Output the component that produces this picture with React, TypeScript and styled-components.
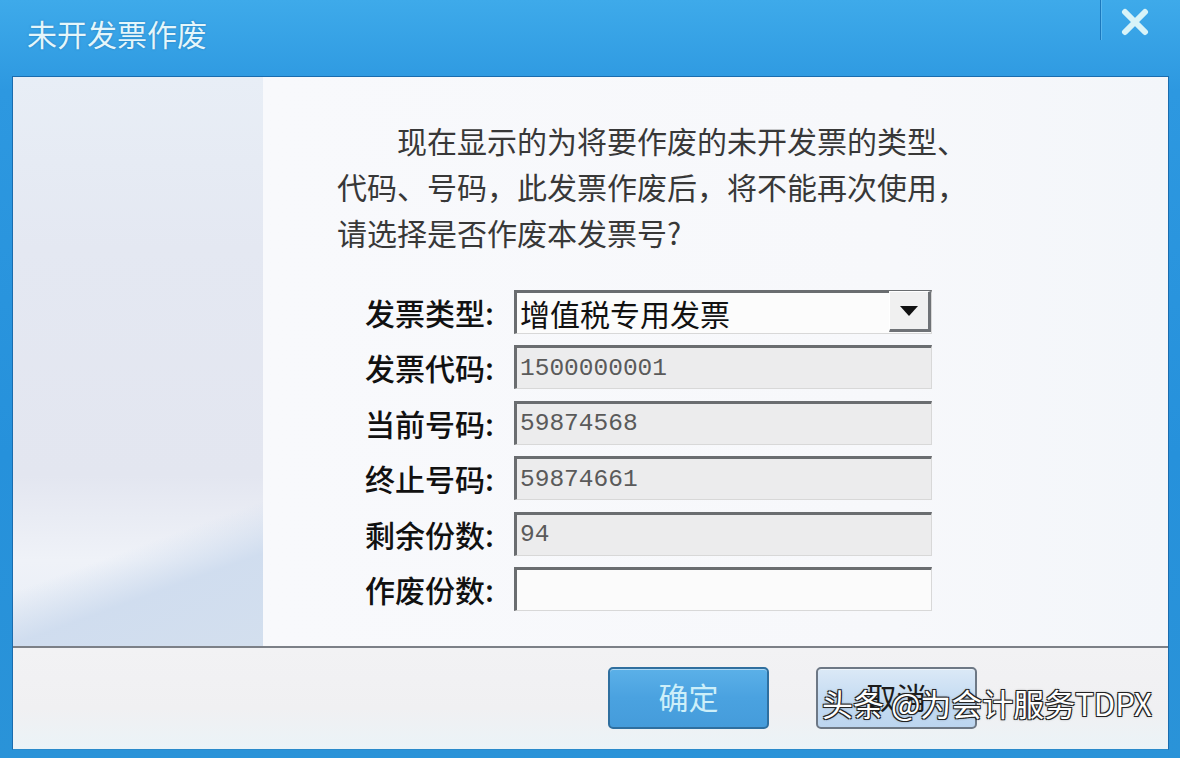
import React from "react";
import styled, { createGlobalStyle } from "styled-components";

const GlobalStyle = createGlobalStyle`
  html, body {
    margin: 0;
    padding: 0;
    width: 1180px;
    height: 758px;
    overflow: hidden;
    background: #2a92da;
  }
  * { box-sizing: border-box; }
`;

const CJK = `"Noto Sans CJK SC", "Noto Sans", sans-serif`;

const Window = styled.div`
  position: relative;
  width: 1180px;
  height: 758px;
  display: flex;
  flex-direction: column;
  padding: 0 11px 8px 12px;
  background: linear-gradient(180deg, #3eaaea 0%, #2d98e0 12%, #2691db 60%, #2a93d8 100%);
  font-family: ${CJK};
`;

const TitleBar = styled.div`
  height: 76px;
  display: flex;
  align-items: flex-start;
  justify-content: space-between;
  padding: 12px 0 0 15px;
`;

const Title = styled.div`
  font-size: 30px;
  line-height: 42px;
  color: #e4f6fb;
  text-shadow: 0 0 2px rgba(20, 90, 150, 0.6);
`;

const CloseBox = styled.div`
  width: 69px;
  height: 40px;
  margin-top: -12px;
  display: flex;
  align-items: center;
  justify-content: center;
  border-left: 1px solid #1b78bd;
  box-shadow: inset 1px 0 0 rgba(120, 200, 245, 0.5);
  padding-top: 4px;
`;

const Panel = styled.div`
  flex: 1;
  display: flex;
  flex-direction: column;
  border: 1px solid #1a6cae;
  border-bottom-color: #2a8acb;
  background: #f6f7fb;
`;

const Body = styled.div`
  height: 569px;
  display: flex;
`;

const Sidebar = styled.div`
  width: 250px;
  background:
    linear-gradient(160deg, transparent 0%, transparent 78%, rgba(205, 219, 238, 0.9) 86%, #d3dfee 100%),
    linear-gradient(180deg, #e8eef6 0%, #e4e8f2 30%, #e3e6f0 70%, #eff2f8 85%, #e7edf6 100%);
`;

const Content = styled.div`
  flex: 1;
  padding: 40px 0 0 74px;
  background: linear-gradient(90deg, #f8f9fc 0%, #f7f8fb 70%, #f3f6fa 100%);
`;

const Message = styled.p`
  margin: 0;
  width: 640px;
  font-size: 30px;
  line-height: 46px;
  color: #383838;
  text-indent: 60px;
`;

const Form = styled.div`
  margin: 35px 0 0 28px;
  display: grid;
  grid-template-columns: 136px 418px;
  column-gap: 13px;
  row-gap: 11.4px;
  align-items: center;
`;

const Label = styled.div`
  font-size: 30px;
  line-height: 44px;
  color: #111;
  font-weight: 500;
  white-space: nowrap;
`;

const Field = styled.div<{ $readOnly?: boolean }>`
  height: 44px;
  display: flex;
  align-items: center;
  padding-left: 3px;
  border-top: 3px solid #6a6d70;
  border-left: 3px solid #6a6d70;
  border-right: 1px solid #d8d8d8;
  border-bottom: 1px solid #d8d8d8;
  background: ${(p) => (p.$readOnly ? "#ececed" : "#fbfbfb")};
  font-family: "Liberation Mono", "DejaVu Sans Mono", monospace;
  font-size: 24.5px;
  color: #5a5a5a;
`;

const Select = styled.div`
  height: 44px;
  display: flex;
  align-items: center;
  justify-content: space-between;
  padding-left: 3px;
  border-top: 3px solid #6a6d70;
  border-left: 3px solid #6a6d70;
  border-right: 1px solid #d8d8d8;
  border-bottom: 1px solid #d8d8d8;
  background: #fcfcfc;
  font-size: 30px;
  color: #111;
`;

const DropButton = styled.div`
  width: 42px;
  height: 41px;
  margin-top: -3px;
  display: flex;
  align-items: center;
  justify-content: center;
  background: #f0f0f0;
  border-top: 1px solid #fff;
  border-left: 1px solid #fff;
  border-right: 3px solid #6f7276;
  border-bottom: 3px solid #6f7276;
`;

const Footer = styled.div`
  flex: 1;
  display: flex;
  align-items: flex-start;
  gap: 47px;
  padding: 19px 0 0 595px;
  border-top: 2px solid #7c8087;
  background: linear-gradient(180deg, #f2f2f4 0%, #f0f0f2 60%, #ebf3f7 100%);
`;

const Button = styled.div<{ $primary?: boolean }>`
  width: 161px;
  height: 62px;
  display: flex;
  align-items: center;
  justify-content: center;
  padding-bottom: 4px;
  border-radius: 5px;
  font-size: 30px;
  border: 2px solid ${(p) => (p.$primary ? "#2f6f9f" : "#6d7885")};
  color: ${(p) => (p.$primary ? "#cdeff9" : "#1c1c1c")};
  background: ${(p) =>
    p.$primary
      ? "linear-gradient(180deg, #5bb0e8 0%, #4aa2e0 50%, #459cdb 100%)"
      : "linear-gradient(180deg, #dbe9f7 0%, #c6dcf2 50%, #bcd5ef 100%)"};
  box-shadow: inset 0 1px 0 rgba(255, 255, 255, 0.5);
`;

const Watermark = styled.div`
  position: absolute;
  left: 822px;
  top: 682px;
  font-family: ${CJK};
  font-size: 31px;
  line-height: 42px;
  color: #ffffff;
  white-space: nowrap;
  text-shadow:
    -1px -1px 0 #222, 1px -1px 0 #222, -1px 1px 0 #222, 1px 1px 0 #222,
    0 0 3px rgba(0, 0, 0, 0.6);
`;

const CloseIcon = () => (
  <svg width="28" height="28" viewBox="0 0 28 28">
    <path
      d="M4 4 L24 24 M24 4 L4 24"
      stroke="#d8f3f8"
      strokeWidth="6"
      strokeLinecap="round"
    />
  </svg>
);

const ArrowDown = () => (
  <svg width="18" height="10" viewBox="0 0 18 10">
    <path d="M0 0 H18 L9 10 Z" fill="#111" />
  </svg>
);

const rows = [
  { label: "发票代码:", value: "1500000001", readOnly: true },
  { label: "当前号码:", value: "59874568", readOnly: true },
  { label: "终止号码:", value: "59874661", readOnly: true },
  { label: "剩余份数:", value: "94", readOnly: true },
  { label: "作废份数:", value: "", readOnly: false },
];

export default function App() {
  return (
    <>
      <GlobalStyle />
      <Window>
        <TitleBar>
          <Title>未开发票作废</Title>
          <CloseBox>
            <CloseIcon />
          </CloseBox>
        </TitleBar>
        <Panel>
          <Body>
            <Sidebar />
            <Content>
              <Message>
                现在显示的为将要作废的未开发票的类型、
                <br />
                代码、号码，此发票作废后，将不能再次使用，
                <br />
                请选择是否作废本发票号?
              </Message>
              <Form>
                <Label>发票类型:</Label>
                <Select>
                  <span>增值税专用发票</span>
                  <DropButton>
                    <ArrowDown />
                  </DropButton>
                </Select>
                {rows.map((r) => (
                  <React.Fragment key={r.label}>
                    <Label>{r.label}</Label>
                    <Field $readOnly={r.readOnly}>{r.value}</Field>
                  </React.Fragment>
                ))}
              </Form>
            </Content>
          </Body>
          <Footer>
            <Button $primary>确定</Button>
            <Button>取消</Button>
          </Footer>
        </Panel>
        <Watermark>头条 @为会计服务TDPX</Watermark>
      </Window>
    </>
  );
}
